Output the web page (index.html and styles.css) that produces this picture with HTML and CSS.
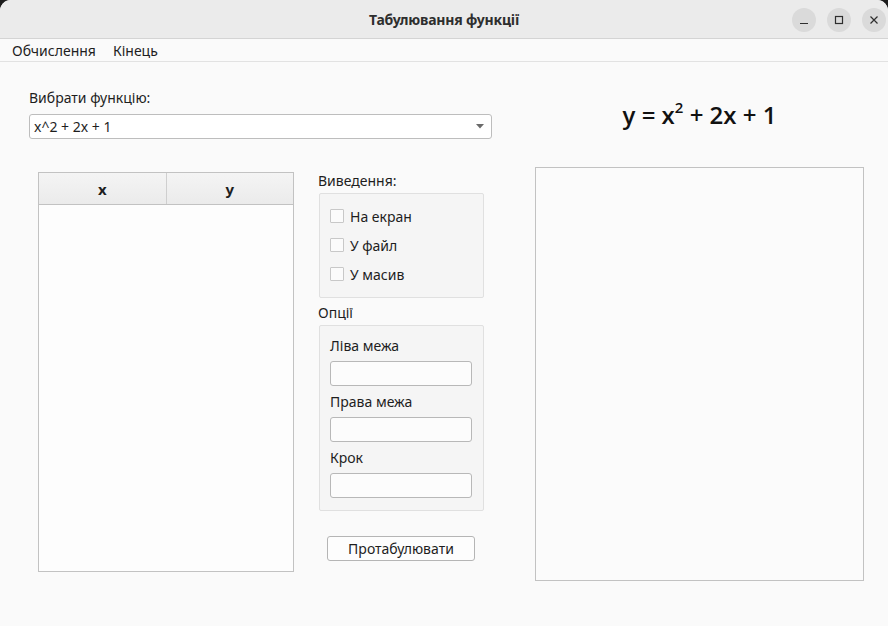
FILE: index.html
```html
<!DOCTYPE html>
<html lang="uk">
<head>
<meta charset="utf-8">
<title>Табулювання функції</title>
<link rel="stylesheet" href="styles.css">
</head>
<body>
<div class="window">
  <div class="titlebar">
    <div class="title">Табулювання функції</div>
    <div class="controls">
      <span class="ctl"><svg width="10" height="10" viewBox="0 0 10 10"><path d="M1 8.5h8" stroke="#2e2e2e" stroke-width="1.2"/></svg></span>
      <span class="ctl"><svg width="10" height="10" viewBox="0 0 10 10"><rect x="1.5" y="1.5" width="7" height="7" fill="none" stroke="#2e2e2e" stroke-width="1.2"/></svg></span>
      <span class="ctl"><svg width="10" height="10" viewBox="0 0 10 10"><path d="M1.5 1.5l7 7M8.5 1.5l-7 7" stroke="#2e2e2e" stroke-width="1.2"/></svg></span>
    </div>
  </div>
  <div class="menubar">
    <span class="menu-item">Обчислення</span>
    <span class="menu-item">Кінець</span>
  </div>
  <div class="content">
    <div class="left">
      <div class="label choose">Вибрати функцію:</div>
      <div class="combo">
        <span>x^2 + 2x + 1</span>
        <svg width="8" height="5" viewBox="0 0 8 5"><path d="M0 0h8L4 4.5z" fill="#6a6a6a"/></svg>
      </div>
      <div class="row">
        <div class="table">
          <div class="thead">
            <div class="th">x</div>
            <div class="th">y</div>
          </div>
          <div class="tbody"></div>
        </div>
        <div class="options">
          <div class="label">Виведення:</div>
          <div class="group checks">
            <label class="check"><span class="box"></span>На екран</label>
            <label class="check"><span class="box"></span>У файл</label>
            <label class="check"><span class="box"></span>У масив</label>
          </div>
          <div class="label opt-title">Опції</div>
          <div class="group fields">
            <div class="label">Ліва межа</div>
            <div class="input"></div>
            <div class="label">Права межа</div>
            <div class="input"></div>
            <div class="label">Крок</div>
            <div class="input last"></div>
          </div>
          <div class="btn-wrap"><button class="btn">Протабулювати</button></div>
        </div>
      </div>
    </div>
    <div class="right">
      <div class="formula">y = x<sup>2</sup> + 2x + 1</div>
      <div class="canvas"></div>
    </div>
  </div>
</div>
</body>
</html>
```
FILE: styles.css
```css
* { box-sizing: border-box; }
html, body { margin: 0; padding: 0; }
body {
  background: #1c1c1c;
  width: 888px;
  height: 626px;
  overflow: hidden;
  font-family: "Noto Sans", "Open Sans", sans-serif;
  font-size: 14px;
  color: #1e1e1e;
}
.window {
  width: 888px;
  height: 626px;
  background: #fafafa;
  border-radius: 11px 11px 0 0;
  overflow: hidden;
}
.titlebar {
  height: 39px;
  background: #ebebeb;
  border-bottom: 1px solid #d4d4d4;
  display: flex;
  align-items: center;
  justify-content: center;
  position: relative;
}
.title {
  font-weight: bold;
  font-size: 14px;
  color: #2e2e2e;
  letter-spacing: -0.2px;
}
.controls {
  position: absolute;
  right: 2px;
  top: 8px;
  display: flex;
  gap: 11px;
}
.ctl {
  width: 24px;
  height: 24px;
  border-radius: 50%;
  background: #dadada;
  display: flex;
  align-items: center;
  justify-content: center;
}
.menubar {
  height: 23px;
  border-bottom: 1px solid #e2e2e2;
  display: flex;
  align-items: center;
  padding-left: 12px;
  gap: 17px;
  background: #fafafa;
}
.menu-item { font-size: 14px; color: #1e1e1e; }
.content {
  display: flex;
  padding-top: 27px;
}
.left {
  width: 492px;
  padding-left: 29px;
}
.label { font-size: 14px; line-height: 18px; color: #1e1e1e; }
.choose { margin-bottom: 7px; }
.combo {
  height: 25px;
  background: #ffffff;
  border: 1px solid #bdbdbd;
  border-radius: 3px;
  display: flex;
  align-items: center;
  justify-content: space-between;
  padding: 0 7px 0 4px;
  font-size: 14px;
}
.row {
  display: flex;
  margin-top: 33px;
  padding-left: 9px;
}
.table {
  width: 256px;
  height: 400px;
  border: 1px solid #c2c2c2;
  background: #fdfdfd;
  display: flex;
  flex-direction: column;
}
.thead {
  display: flex;
  height: 32px;
  background: linear-gradient(#f4f4f4, #ebebeb);
  border-bottom: 1px solid #c2c2c2;
}
.th {
  flex: 1;
  display: flex;
  align-items: center;
  justify-content: center;
  font-weight: bold;
  font-size: 15px;
}
.th + .th { border-left: 1px solid #cfcfcf; }
.tbody { flex: 1; }
.options {
  margin-left: 24px;
  width: 166px;
}
.group {
  margin-top: 3px;
  margin-left: 1px;
  width: 165px;
  background: #f5f5f5;
  border: 1px solid #e0e0e0;
  border-radius: 2px;
}
.checks {
  height: 105px;
  padding: 13px 0 0 10px;
  display: flex;
  flex-direction: column;
  gap: 11px;
}
.check {
  display: flex;
  align-items: center;
  gap: 6px;
  height: 18px;
  font-size: 14px;
}
.box {
  width: 14px;
  height: 14px;
  border: 1px solid #c8c8c8;
  background: #fbfbfb;
  border-radius: 1px;
}
.opt-title { margin-top: 6px; }
.fields {
  height: 186px;
  padding: 11px 11px 0 10px;
}
.fields .label { margin-bottom: 6px; }
.input {
  height: 25px;
  background: #fcfcfc;
  border: 1px solid #b8b8b8;
  border-radius: 3px;
  margin-bottom: 7px;
}
.btn-wrap { padding: 25px 0 0 9px; }
.btn {
  width: 148px;
  height: 25px;
  background: #fdfdfd;
  border: 1px solid #b5b5b5;
  border-radius: 3px;
  font-family: inherit;
  font-size: 14px;
  color: #1e1e1e;
  padding: 0;
}
.right {
  margin-left: 43px;
  width: 329px;
  display: flex;
  flex-direction: column;
}
.formula {
  text-align: center;
  font-family: "Open Sans", "Noto Sans", sans-serif;
  font-weight: 600;
  font-size: 24px;
  line-height: 32px;
  margin-top: 10px;
  color: #111;
  letter-spacing: 0;
}
.formula sup {
  font-size: 15px;
  line-height: 0;
  vertical-align: 11px;
}
.canvas {
  margin-top: 36px;
  height: 414px;
  border: 1px solid #c2c2c2;
  background: #fbfbfb;
}
```
